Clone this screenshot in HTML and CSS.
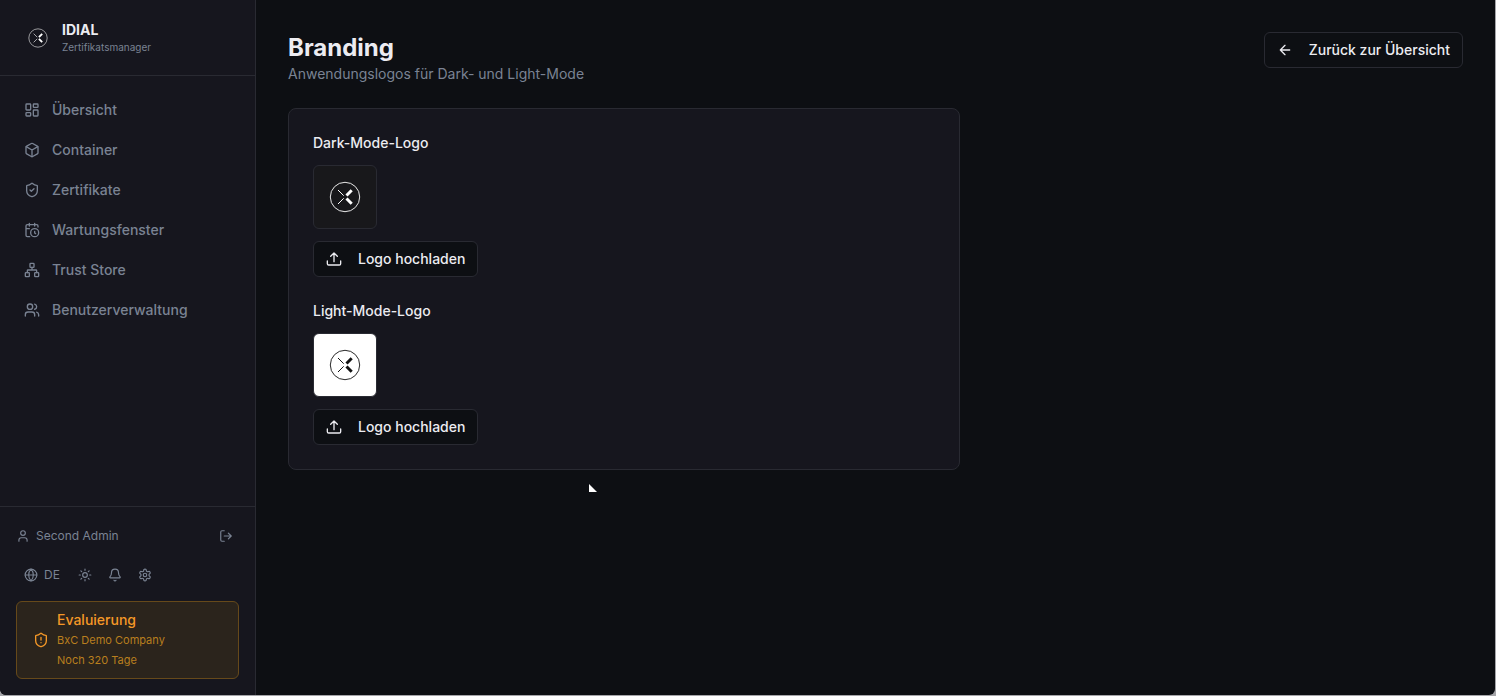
FILE: index.html
```html
<!DOCTYPE html>
<html lang="de">
<head>
    <meta charset="utf-8">
    <title>Branding - IDIAL Zertifikatsmanager</title>
    <link rel="stylesheet" href="styles.css">
</head>
<body>
    <svg class="sprite" aria-hidden="true">
        <symbol id="logo" viewBox="0 0 32 32">
            <circle cx="16" cy="16" r="14.7" fill="none" stroke="currentColor" stroke-width="0.9"/>
            <path d="M9 9l5.7 5.7M9 23l5.7-5.7" fill="none" stroke="currentColor" stroke-width="1"/>
            <path d="M22.7 9.3L17.5 14.5M17.5 17.5l5.2 5.2" fill="none" stroke="currentColor" stroke-width="3"/>
        </symbol>
        <symbol id="upload" viewBox="0 0 24 24">
            <path d="M12 16V3M7 8l5-5 5 5M2 15v4a2 2 0 0 0 2 2h16a2 2 0 0 0 2-2v-4"/>
        </symbol>
    </svg>

    <div class="app">
        <aside class="sidebar">
            <div class="brand">
                <svg class="brand-logo"><use href="#logo"/></svg>
                <div>
                    <div class="brand-name">IDIAL</div>
                    <div class="brand-sub">Zertifikatsmanager</div>
                </div>
            </div>

            <nav class="nav">
                <a href="#">
                    <svg class="icon" viewBox="0 0 24 24"><rect x="3" y="3" width="7" height="9" rx="1"/><rect x="14" y="3" width="7" height="5" rx="1"/><rect x="14" y="12" width="7" height="9" rx="1"/><rect x="3" y="16" width="7" height="5" rx="1"/></svg>
                    Übersicht
                </a>
                <a href="#">
                    <svg class="icon" viewBox="0 0 24 24"><path d="M21 8a2 2 0 0 0-1-1.73l-7-4a2 2 0 0 0-2 0l-7 4A2 2 0 0 0 3 8v8a2 2 0 0 0 1 1.73l7 4a2 2 0 0 0 2 0l7-4A2 2 0 0 0 21 16Z"/><path d="M3.3 7L12 12l8.7-5M12 22V12"/></svg>
                    Container
                </a>
                <a href="#">
                    <svg class="icon" viewBox="0 0 24 24"><path d="M20 13c0 5-3.5 7.5-7.66 8.95a1 1 0 0 1-.67-.01C7.5 20.5 4 18 4 13V6a1 1 0 0 1 1-1c2 0 4.5-1.2 6.24-2.72a1.17 1.17 0 0 1 1.52 0C14.51 3.81 17 5 19 5a1 1 0 0 1 1 1z"/><path d="M9 12l2 2 4-4"/></svg>
                    Zertifikate
                </a>
                <a href="#">
                    <svg class="icon" viewBox="0 0 24 24"><path d="M21 7.5V6a2 2 0 0 0-2-2H5a2 2 0 0 0-2 2v14a2 2 0 0 0 2 2h3.5M16 2v4M8 2v4M3 10h5M17.5 17.5L16 16.3V14"/><circle cx="16" cy="16" r="6"/></svg>
                    Wartungsfenster
                </a>
                <a href="#">
                    <svg class="icon" viewBox="0 0 24 24"><rect x="16" y="16" width="6" height="6" rx="1"/><rect x="2" y="16" width="6" height="6" rx="1"/><rect x="9" y="2" width="6" height="6" rx="1"/><path d="M5 16v-3a1 1 0 0 1 1-1h12a1 1 0 0 1 1 1v3M12 12V8"/></svg>
                    Trust Store
                </a>
                <a href="#">
                    <svg class="icon" viewBox="0 0 24 24"><path d="M16 21v-2a4 4 0 0 0-4-4H6a4 4 0 0 0-4 4v2"/><circle cx="9" cy="7" r="4"/><path d="M22 21v-2a4 4 0 0 0-3-3.87M16 3.13a4 4 0 0 1 0 7.75"/></svg>
                    Benutzerverwaltung
                </a>
            </nav>

            <div class="sidebar-footer">
                <div class="user-row">
                    <svg class="icon icon-sm" viewBox="0 0 24 24"><path d="M19 21v-2a4 4 0 0 0-4-4H9a4 4 0 0 0-4 4v2"/><circle cx="12" cy="7" r="4"/></svg>
                    <span>Second Admin</span>
                    <button class="icon-btn logout" aria-label="Abmelden">
                        <svg class="icon icon-sm" viewBox="0 0 24 24"><path d="M9 21H5a2 2 0 0 1-2-2V5a2 2 0 0 1 2-2h4M16 17l5-5-5-5M21 12H9"/></svg>
                    </button>
                </div>

                <div class="tools">
                    <button class="icon-btn lang">
                        <svg class="icon icon-sm" viewBox="0 0 24 24"><circle cx="12" cy="12" r="10"/><path d="M12 2a14.5 14.5 0 0 0 0 20 14.5 14.5 0 0 0 0-20M2 12h20"/></svg>
                        DE
                    </button>
                    <button class="icon-btn" aria-label="Farbschema">
                        <svg class="icon icon-sm" viewBox="0 0 24 24"><circle cx="12" cy="12" r="4"/><path d="M12 2v2M12 20v2M4.93 4.93l1.41 1.41M17.66 17.66l1.41 1.41M2 12h2M20 12h2M6.34 17.66l-1.41 1.41M19.07 4.93l-1.41 1.41"/></svg>
                    </button>
                    <button class="icon-btn" aria-label="Benachrichtigungen">
                        <svg class="icon icon-sm" viewBox="0 0 24 24"><path d="M10.27 21a2 2 0 0 0 3.46 0M3.26 15.33A1 1 0 0 0 4 17h16a1 1 0 0 0 .74-1.67C19.41 13.96 18 12.5 18 8A6 6 0 0 0 6 8c0 4.5-1.41 5.96-2.74 7.33"/></svg>
                    </button>
                    <button class="icon-btn" aria-label="Einstellungen">
                        <svg class="icon icon-sm" viewBox="0 0 24 24"><path d="M12.22 2h-.44a2 2 0 0 0-2 2v.18a2 2 0 0 1-1 1.73l-.43.25a2 2 0 0 1-2 0l-.15-.08a2 2 0 0 0-2.73.73l-.22.38a2 2 0 0 0 .73 2.73l.15.1a2 2 0 0 1 1 1.72v.51a2 2 0 0 1-1 1.74l-.15.09a2 2 0 0 0-.73 2.73l.22.38a2 2 0 0 0 2.73.73l.15-.08a2 2 0 0 1 2 0l.43.25a2 2 0 0 1 1 1.73V20a2 2 0 0 0 2 2h.44a2 2 0 0 0 2-2v-.18a2 2 0 0 1 1-1.73l.43-.25a2 2 0 0 1 2 0l.15.08a2 2 0 0 0 2.73-.73l.22-.39a2 2 0 0 0-.73-2.73l-.15-.08a2 2 0 0 1-1-1.74v-.5a2 2 0 0 1 1-1.74l.15-.09a2 2 0 0 0 .73-2.73l-.22-.38a2 2 0 0 0-2.73-.73l-.15.08a2 2 0 0 1-2 0l-.43-.25a2 2 0 0 1-1-1.73V4a2 2 0 0 0-2-2z"/><circle cx="12" cy="12" r="3"/></svg>
                    </button>
                </div>

                <div class="license">
                    <svg class="icon" viewBox="0 0 24 24"><path d="M20 13c0 5-3.5 7.5-7.66 8.95a1 1 0 0 1-.67-.01C7.5 20.5 4 18 4 13V6a1 1 0 0 1 1-1c2 0 4.5-1.2 6.24-2.72a1.17 1.17 0 0 1 1.52 0C14.51 3.81 17 5 19 5a1 1 0 0 1 1 1z"/><path d="M12 8v4M12 16h.01"/></svg>
                    <div>
                        <div class="license-title">Evaluierung</div>
                        <div class="license-text">BxC Demo Company</div>
                        <div class="license-text">Noch 320 Tage</div>
                    </div>
                </div>
            </div>
        </aside>

        <main class="main">
            <header class="page-header">
                <div>
                    <h1>Branding</h1>
                    <p>Anwendungslogos für Dark- und Light-Mode</p>
                </div>
                <button class="btn">
                    <svg class="icon" viewBox="0 0 24 24"><path d="M12 19l-7-7 7-7M19 12H5"/></svg>
                    Zurück zur Übersicht
                </button>
            </header>

            <section class="card">
                <div class="logo-field">
                    <h2>Dark-Mode-Logo</h2>
                    <div class="preview preview-dark"><svg><use href="#logo"/></svg></div>
                    <button class="btn"><svg class="icon"><use href="#upload"/></svg>Logo hochladen</button>
                </div>
                <div class="logo-field">
                    <h2>Light-Mode-Logo</h2>
                    <div class="preview preview-light"><svg><use href="#logo"/></svg></div>
                    <button class="btn"><svg class="icon"><use href="#upload"/></svg>Logo hochladen</button>
                </div>
            </section>
        </main>
    </div>

    <svg class="cursor" viewBox="0 0 8 8" aria-hidden="true"><path d="M0 0v8h8z"/></svg>
</body>
</html>
```

FILE: styles.css
```css
* { box-sizing: border-box; }
body {
    margin: 0; background: #a5a5a9; color: #ececf1;
    font-family: Inter, sans-serif; font-size: 14px; line-height: 20px;
}
h1, h2, p { margin: 0; }
button { font: inherit; color: inherit; }
.sprite { display: none; }

.app {
    display: flex; min-height: calc(100vh - 1px); margin: 0 1px 1px 0;
    background: #0d0f13; border-radius: 0 0 6px 6px; overflow: hidden;
}

.icon {
    width: 16px; height: 16px; flex: none;
    fill: none; stroke: currentColor; stroke-width: 2;
    stroke-linecap: round; stroke-linejoin: round;
}
.icon-sm { width: 14px; height: 14px; }

/* sidebar */
.sidebar {
    width: 256px; flex: none; display: flex; flex-direction: column;
    background: #16161e; border-right: 1px solid #292a32; color: #7a8393;
}
.brand {
    display: flex; align-items: center; gap: 14px;
    padding: 20px 28px; border-bottom: 1px solid #292a32;
}
.brand-logo { width: 20px; height: 20px; color: #fff; }
.brand-name { font-weight: 700; color: #ececf1; }
.brand-sub { font-size: 10px; line-height: 15px; }
.nav { flex: 1; padding: 14px 12px; display: flex; flex-direction: column; gap: 4px; }
.nav a {
    display: flex; align-items: center; gap: 12px; padding: 8px 12px;
    color: inherit; text-decoration: none; font-weight: 500;
}
.nav { padding-top: 16px; }
.sidebar-footer { padding: 16px; border-top: 1px solid #292a32; }
.user-row { display: flex; align-items: center; gap: 6px; font-size: 12px; height: 26px; }
.icon-btn {
    display: flex; align-items: center; gap: 6px; padding: 6px 8px;
    border: 0; background: none; font-size: 12px; line-height: 14px;
}
.logout { margin-left: auto; padding: 6px; }
.lang { padding-right: 10px; }
.tools { display: flex; margin: 13px 0; }
.license {
    display: flex; align-items: center; gap: 8px; padding: 8px 16px;
    border: 1px solid #66491a; border-radius: 6px;
    background: #2b241c; color: #f59827;
}
.license-title { font-weight: 500; }
.license-text { font-size: 11px; color: #b97f1e; }

/* content */
.main { flex: 1; padding: 32px; }
.page-header { display: flex; justify-content: space-between; align-items: flex-start; margin-bottom: 24px; }
.page-header h1 { font-size: 24px; line-height: 32px; font-weight: 700; }
.page-header p { color: #7a8393; }
.btn {
    display: flex; align-items: center; gap: 16px; height: 36px; padding: 0 12px;
    border: 1px solid #292a32; border-radius: 6px; background: #0d0f13; font-weight: 500;
}
.card {
    max-width: 672px; padding: 24px; display: flex; flex-direction: column; gap: 24px;
    background: #16161e; border: 1px solid #292a32; border-radius: 8px;
}
.logo-field { display: flex; flex-direction: column; align-items: flex-start; gap: 12px; }
.logo-field h2 { font-size: 14px; line-height: 20px; font-weight: 500; }
.preview {
    width: 64px; height: 64px; display: flex; align-items: center; justify-content: center;
    border: 1px solid #292a32; border-radius: 6px;
}
.preview svg { width: 32px; height: 32px; }
.preview-dark { background: #18181b; color: #fff; }
.preview-light { background: #fff; color: #111; }

.cursor { position: absolute; left: 589px; top: 484px; width: 8px; height: 8px; fill: #fff; }
```
